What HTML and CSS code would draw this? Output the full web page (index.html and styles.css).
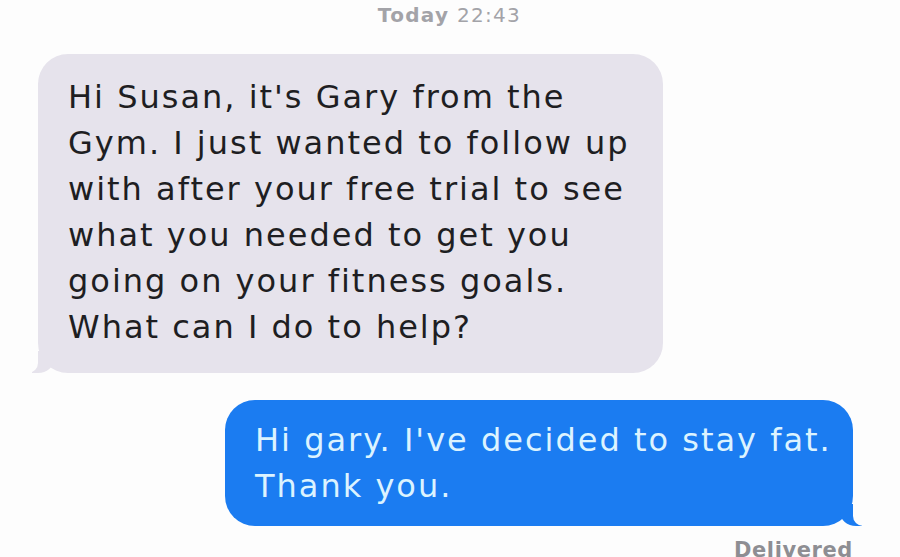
FILE: index.html
```html
<!DOCTYPE html>
<html lang="en">
<head>
    <meta charset="UTF-8">
    <meta name="viewport" content="width=device-width, initial-scale=1.0">
    <title>Messages</title>
    <link rel="stylesheet" href="styles.css">
</head>
<body>

    <div class="thread">
        <div class="timestamp"><span class="day">Today</span> 22:43</div>

        <!-- Incoming message -->
        <div class="row incoming">
            <div class="bubble grey">
                Hi Susan, it's Gary from the<br>
                Gym. I just wanted to follow up<br>
                with after your free trial to see<br>
                what you needed to get you<br>
                going on your fitness goals.<br>
                What can I do to help?
            </div>
        </div>

        <!-- Outgoing message -->
        <div class="row outgoing">
            <div class="bubble blue">
                Hi gary. I've decided to stay fat.<br>
                Thank you.
            </div>
        </div>

        <div class="status">Delivered</div>
    </div>

</body>
</html>
```

FILE: styles.css
```css
* {
    margin: 0;
    padding: 0;
    box-sizing: border-box;
}

body {
    font-family: "DejaVu Sans", "Liberation Sans", Arial, sans-serif;
    background-color: #fdfdfd;
    color: #1c1c1e;
    height: 100vh;
    overflow: hidden;
}

.thread {
    display: flex;
    flex-direction: column;
    padding: 0 47px 0 38px;
}

.timestamp {
    align-self: center;
    margin-left: 8px;
    padding-top: 3px;
    height: 54px;
    font-size: 20px;
    letter-spacing: 1.3px;
    color: #a3a3a8;
}

.day {
    font-weight: bold;
}

.row {
    display: flex;
}

.incoming {
    justify-content: flex-start;
}

.outgoing {
    justify-content: flex-end;
    margin-top: 27px;
}

.bubble {
    position: relative;
    font-size: 32px;
    line-height: 46px;
    letter-spacing: 2px;
    border-radius: 30px;
}

.grey {
    width: 625px;
    padding: 20px 20px 23px 30px;
    background-color: #e6e3ec;
    color: #1e1e22;
}

.blue {
    width: 628px;
    padding: 17px 20px 17px 30px;
    background-color: #1b7cf1;
    color: #dcf3ff;
}

/* bubble tails */
.grey::before,
.blue::before {
    content: "";
    position: absolute;
    bottom: 0;
    width: 22px;
    height: 22px;
}

.grey::before {
    left: -6px;
    background-color: #e6e3ec;
    border-bottom-right-radius: 16px 14px;
}

.blue::before {
    right: -9px;
    background-color: #1b7cf1;
    border-bottom-left-radius: 16px 14px;
}

.grey::after,
.blue::after {
    content: "";
    position: absolute;
    bottom: 0;
    width: 26px;
    height: 22px;
    background-color: #fdfdfd;
}

.grey::after {
    left: -26px;
    border-bottom-right-radius: 10px;
}

.blue::after {
    right: -26px;
    border-bottom-left-radius: 10px;
}

.status {
    align-self: flex-end;
    margin-top: 12px;
    font-size: 21px;
    font-weight: bold;
    letter-spacing: 0.6px;
    color: #8e8e93;
}
```
